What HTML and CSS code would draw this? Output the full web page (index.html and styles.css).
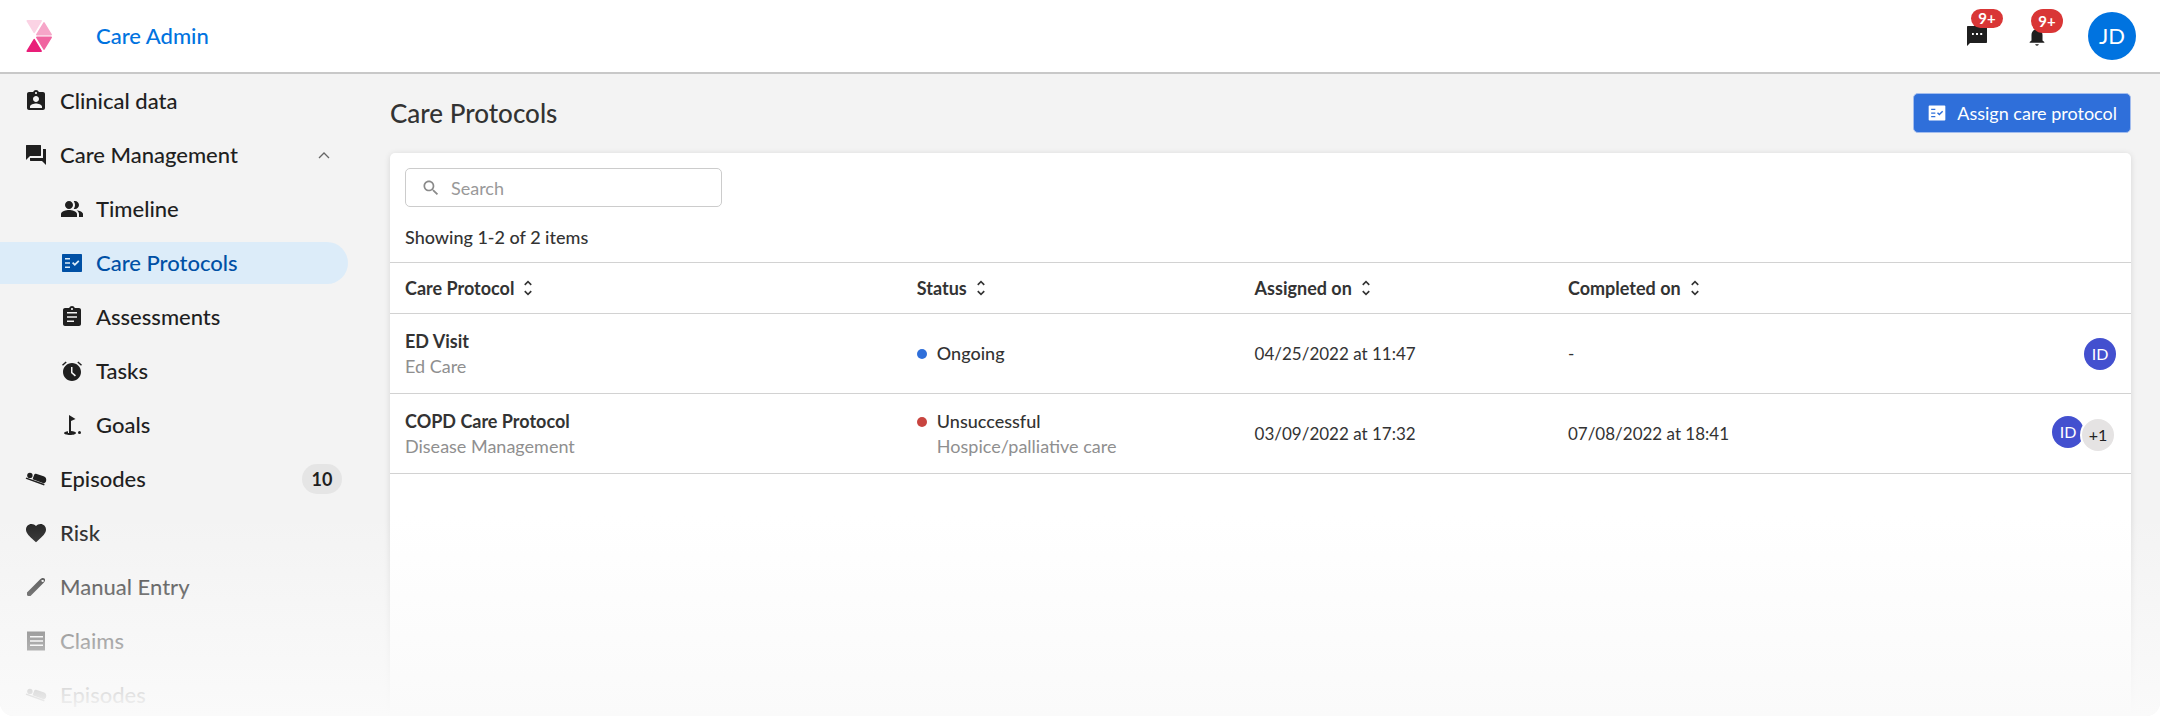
FILE: index.html
```html
<!DOCTYPE html>
<html lang="en">
<head>
<meta charset="utf-8">
<meta name="viewport" content="width=device-width, initial-scale=1">
<title>Care Protocols</title>
<link rel="stylesheet" href="styles.css">
</head>
<body>
<svg class="sprite" aria-hidden="true">
  <symbol id="i-person-card" viewBox="0 0 24 24"><path d="M19 3h-4.180C14.400 1.840 13.300 1 12 1c-1.300 0-2.400.84-2.820 2H5c-1.100 0-2 .9-2 2v14c0 1.100.9 2 2 2h14c1.100 0 2-.9 2-2V5c0-1.100-.9-2-2-2zm-7 0c.55 0 1 .45 1 1s-.45 1-1 1-1-.45-1-1 .45-1 1-1zm0 4c1.660 0 3 1.340 3 3s-1.340 3-3 3-3-1.340-3-3 1.340-3 3-3zm6 12H6v-1.400c0-2 4-3.100 6-3.100s6 1.100 6 3.100V19z"/></symbol>
  <symbol id="i-chats" viewBox="0 0 24 24"><path d="M21.500 6H19v9H6v2.500c0 .3.200.5.500.5H18l4 4V6.500c0-.3-.2-.5-.5-.5zM17 12.500V2.500c0-.3-.2-.5-.5-.5h-14c-.3 0-.5.200-.5.500V17l4-4h10.500c.3 0 .5-.2.500-.5z"/></symbol>
  <symbol id="i-people" viewBox="0 0 24 24"><path fill-rule="evenodd" d="M16.670 13.130C18.040 14.060 19 15.320 19 17v3h4v-3c0-2.180-3.570-3.470-6.330-3.870zM15 12c2.210 0 4-1.790 4-4s-1.790-4-4-4c-.47 0-.91.1-1.330.24C14.500 5.270 15 6.580 15 8s-.5 2.730-1.330 3.760c.42.14.86.24 1.330.24zM9 12c2.210 0 4-1.790 4-4s-1.790-4-4-4-4 1.790-4 4 1.790 4 4 4zm0 1c-2.670 0-8 1.340-8 4v3h16v-3c0-2.660-5.330-4-8-4z"/></symbol>
  <symbol id="i-fact" viewBox="0 0 24 24"><path fill-rule="evenodd" d="M21 3H3c-.6 0-1 .4-1 1v16c0 .6.400 1 1 1h18c.6 0 1-.4 1-1V4c0-.6-.4-1-1-1zM10 17H5v-1.500h5V17zm0-4.200H5v-1.500h5v1.500zm0-4.300H5V7h5v1.500zm4.820 6.500L12 12.160l1.200-1.200 1.620 1.620L18.200 9.200l1.210 1.220L14.820 15z"/></symbol>
  <symbol id="i-clipboard" viewBox="0 0 24 24"><path d="M19 3h-4.180C14.400 1.840 13.300 1 12 1c-1.300 0-2.400.84-2.820 2H5c-1.100 0-2 .9-2 2v14c0 1.100.9 2 2 2h14c1.100 0 2-.9 2-2V5c0-1.100-.9-2-2-2zm-7 0c.55 0 1 .45 1 1s-.45 1-1 1-1-.45-1-1 .45-1 1-1zm2 14H7v-1.500h7V17zm3-4.200H7v-1.600h10v1.600zm0-4.300H7V7h10v1.500z"/></symbol>
  <symbol id="i-alarm" viewBox="0 0 24 24"><path fill-rule="evenodd" d="M22 5.720l-3.700-3.300-1 1.100 3.700 3.300L22 5.720zM6.700 3.500l-1-1.100L2 5.710l1 1.130L6.700 3.500zM12 4c-4.970 0-9 4.030-9 9s4.020 9 9 9c4.970 0 9-4.030 9-9s-4.030-9-9-9zM11 8h1.500v5.250l3.500 3.100-1.100 1.250-3.900-3.500V8z"/></symbol>
  <symbol id="i-golf" viewBox="0 0 24 24"><circle cx="19.500" cy="19.500" r="1.500"/><path d="M15.500 5.920L9 2v18H8v-1.730c-2.400.2-4 .99-4 1.730 0 1.100 2.690 2 6 2s6-.9 6-2c0-.99-2.160-1.810-5-1.970V8.100l4.500-2.180z"/></symbol>
  <symbol id="i-stretcher" viewBox="0 0 24 24"><path d="M22.100 14c-.6 1.800-1.600 2.600-3.300 2l-9.500-3.400c-.5-.2-.7-.6-.5-1.100l1.400-3.800c.3-.8 1-1.100 1.800-.9l7.600 2.500c2.200.8 3.100 2.600 2.500 4.700z"/><circle cx="5.900" cy="8.400" r="2.700"/><path d="M1.700 11.800l.5-1.300 18.400 6.600-.5 1.400z"/></symbol>
  <symbol id="i-heart" viewBox="0 0 24 24"><path d="M12 21.350l-1.450-1.320C5.400 15.360 2 12.280 2 8.500 2 5.420 4.420 3 7.500 3c1.740 0 3.410.81 4.500 2.090C13.090 3.810 14.760 3 16.500 3 19.580 3 22 5.420 22 8.500c0 3.780-3.400 6.860-8.550 11.540L12 21.350z"/></symbol>
  <symbol id="i-pencil" viewBox="0 0 24 24"><path fill-rule="evenodd" d="M3 17.500L16.200 4.300c1.700-1.700 3.500-1.700 4.300-.8.900.9.900 2.700-.8 4.300L6.500 21H4.200c-.7 0-1.200-.5-1.200-1.200v-2.300zM17.200 5.900l.9.900c.5.500 1.400.2 1.600-.3.200-.4.200-1-.1-1.300-.4-.3-1-.3-1.400-.1-.5.200-.9.500-1 .8z"/></symbol>
  <symbol id="i-receipt" viewBox="0 0 24 24"><path d="M19 17H6v-1.500h13V17zm0-4.200H6v-1.600h13v1.600zm0-4.300H6V7h13v1.500zM3 22l1-1 1 1 1-1 1 1 1-1 1 1 1-1 1 1 1-1 1 1 1-1 1 1 1-1 1 1 1-1 1 1 1-1 1 1V2l-1 1-1-1-1 1-1-1-1 1-1-1-1 1-1-1-1 1-1-1-1 1-1-1-1 1-1-1-1 1-1-1-1 1-1-1v20z"/></symbol>
  <symbol id="i-sms" viewBox="0 0 24 24"><path d="M21 2H3c-.6 0-1 .4-1 1v19l3-3h16c.6 0 1-.4 1-1V3c0-.6-.4-1-1-1zM8.800 11H7V9h1.800v2zm4.200 0h-2V9h2v2zm4.200 0h-2V9h2v2z"/></symbol>
  <symbol id="i-bell" viewBox="0 0 24 24"><path d="M12 22.500c1.100 0 1.800-.7 2-1.500h-4c.2.8.9 1.500 2 1.500zM18 17v-6c0-3.070-1.640-5.640-4.500-6.320V4c0-.83-.67-1.500-1.500-1.500s-1.500.67-1.500 1.500v.68C7.630 5.360 6 7.920 6 11v6l-2 1.500v.9h16v-.9L18 17z"/></symbol>
  <symbol id="i-search" viewBox="0 0 24 24"><path d="M15.500 14h-.79l-.28-.27C15.410 12.590 16 11.110 16 9.500 16 5.910 13.090 3 9.500 3S3 5.910 3 9.500 5.910 16 9.500 16c1.610 0 3.090-.59 4.230-1.570l.27.28v.79l5 4.990L20.490 19l-4.990-5zm-6 0C7.010 14 5 11.990 5 9.500S7.010 5 9.500 5 14 7.010 14 9.500 11.990 14 9.500 14z"/></symbol>
  <symbol id="i-sort" viewBox="0 0 24 24"><path d="M12 5.830L15.170 9l1.410-1.410L12 3 7.410 7.590 8.830 9 12 5.830zm0 12.340L8.830 15l-1.410 1.410L12 21l4.590-4.590L15.170 15 12 18.170z"/></symbol>
</svg>

<div class="app">
  <header class="topbar">
    <svg class="logo" viewBox="0 0 26 32" role="img" aria-label="Home" stroke-width="1.500" stroke-linejoin="round">
      <path d="M1.200.8h14L8.200 12.400z" fill="#fbd3e4" stroke="#fbd3e4"/>
      <path d="M18 2.900L25.200 14.700H10.800z" fill="#f6a5c8" stroke="#f6a5c8"/>
      <path d="M10.800 17.300h14.400L18 29.100z" fill="#f064a0" stroke="#f064a0"/>
      <path d="M8.200 19.600L15.200 31.200h-14z" fill="#e91e79" stroke="#e91e79"/>
    </svg>
    <a class="brand" href="#">Care Admin</a>
    <div class="tools">
      <button class="tool" type="button" aria-label="Messages"><svg class="icon"><use href="#i-sms"/></svg><span class="count">9+</span></button>
      <button class="tool" type="button" aria-label="Notifications"><svg class="icon medium"><use href="#i-bell"/></svg><span class="count tall">9+</span></button>
      <button class="user" type="button">JD</button>
    </div>
  </header>

  <div class="body">
    <nav class="sidebar">
      <a class="item" href="#"><svg class="icon"><use href="#i-person-card"/></svg>Clinical data</a>
      <a class="item" href="#"><svg class="icon"><use href="#i-chats"/></svg>Care Management
        <svg class="chevron" viewBox="0 0 12 8"><path d="M1 7l5-5 5 5" fill="none" stroke="#666" stroke-width="1.300"/></svg></a>
      <a class="item sub" href="#"><svg class="icon"><use href="#i-people"/></svg>Timeline</a>
      <a class="item sub current" href="#" aria-current="page"><svg class="icon"><use href="#i-fact"/></svg>Care Protocols</a>
      <a class="item sub" href="#"><svg class="icon"><use href="#i-clipboard"/></svg>Assessments</a>
      <a class="item sub" href="#"><svg class="icon"><use href="#i-alarm"/></svg>Tasks</a>
      <a class="item sub" href="#"><svg class="icon"><use href="#i-golf"/></svg>Goals</a>
      <a class="item" href="#"><svg class="icon"><use href="#i-stretcher"/></svg>Episodes<span class="pill">10</span></a>
      <a class="item" href="#"><svg class="icon"><use href="#i-heart"/></svg>Risk</a>
      <a class="item" href="#"><svg class="icon"><use href="#i-pencil"/></svg>Manual Entry</a>
      <a class="item" href="#"><svg class="icon"><use href="#i-receipt"/></svg>Claims</a>
      <a class="item" href="#"><svg class="icon"><use href="#i-stretcher"/></svg>Episodes</a>
    </nav>

    <main class="main">
      <div class="heading">
        <h1>Care Protocols</h1>
        <button class="assign" type="button"><svg class="icon small"><use href="#i-fact"/></svg>Assign care protocol</button>
      </div>
      <section class="card">
        <label class="search">
          <svg class="icon small"><use href="#i-search"/></svg>
          <input type="search" placeholder="Search" aria-label="Search">
        </label>
        <p class="summary">Showing 1-2 of 2 items</p>
        <table>
          <thead>
            <tr>
              <th class="c-name"><button type="button">Care Protocol<svg class="icon small"><use href="#i-sort"/></svg></button></th>
              <th class="c-status"><button type="button">Status<svg class="icon small"><use href="#i-sort"/></svg></button></th>
              <th class="c-assigned"><button type="button">Assigned on<svg class="icon small"><use href="#i-sort"/></svg></button></th>
              <th class="c-completed"><button type="button">Completed on<svg class="icon small"><use href="#i-sort"/></svg></button></th>
              <th class="c-people"></th>
            </tr>
          </thead>
          <tbody>
            <tr>
              <td><strong>ED Visit</strong><div class="note">Ed Care</div></td>
              <td><div class="status"><i class="dot ongoing"></i><div><span class="state">Ongoing</span></div></div></td>
              <td class="date">04/25/2022 at 11:47</td>
              <td class="date">-</td>
              <td><div class="people"><span class="avatar">ID</span></div></td>
            </tr>
            <tr>
              <td><strong>COPD Care Protocol</strong><div class="note">Disease Management</div></td>
              <td><div class="status"><i class="dot failed"></i><div><span class="state">Unsuccessful</span><div class="note">Hospice/palliative care</div></div></div></td>
              <td class="date">03/09/2022 at 17:32</td>
              <td class="date">07/08/2022 at 18:41</td>
              <td><div class="people stack"><span class="avatar">ID</span><span class="avatar more">+1</span></div></td>
            </tr>
          </tbody>
        </table>
      </section>
    </main>
  </div>
  <div class="fade"></div>
</div>
</body>
</html>
```

FILE: styles.css
```css
* { box-sizing: border-box; }
body {
  margin: 0;
  background: #fff;
  color: #333;
  font-family: Lato, "Open Sans", sans-serif;
  font-size: 18px;
  line-height: 24px;
}
a { color: inherit; text-decoration: none; }
button { font: inherit; color: inherit; background: none; border: 0; padding: 0; cursor: pointer; }
.sprite { position: absolute; width: 0; height: 0; }
.icon { width: 24px; height: 24px; fill: currentColor; flex: none; }
.icon.medium { width: 22px; height: 22px; }
.icon.small { width: 20px; height: 20px; }

.app {
  position: relative;
  display: flex;
  flex-direction: column;
  min-height: 100vh;
  background: #f3f3f3;
  border-radius: 0 0 14px 14px;
  overflow: hidden;
}

/* Top bar */
.topbar {
  display: flex;
  align-items: center;
  height: 74px;
  padding: 0 24px 0 26px;
  background: #fff;
  border-bottom: 2px solid #c8c8c8;
}
.logo { width: 26px; height: 32px; }
.brand { margin-left: 44px; font-size: 22px; font-weight: 500; color: #0073e0; }
.tools { display: flex; align-items: center; margin-left: auto; color: #1f1f1f; }
.tool { position: relative; display: flex; align-items: center; justify-content: center; width: 24px; height: 24px; margin-right: 36px; }
.count {
  position: absolute;
  left: 6px;
  bottom: 20px;
  width: 32px;
  height: 19px;
  border-radius: 12px;
  background: #d93636;
  color: #fff;
  font-size: 15px;
  font-weight: 700;
  line-height: 19px;
}
.count.tall { height: 24px; line-height: 24px; bottom: 15px; }
.user { width: 48px; height: 48px; margin-left: 3px; border-radius: 50%; background: #0073e0; color: #fff; font-size: 22px; }

/* Sidebar */
.body { display: flex; flex: 1; }
.sidebar { display: flex; flex-direction: column; gap: 12px; width: 348px; padding-top: 6px; flex: none; color: #1f1f1f; }
.item {
  display: flex;
  align-items: center;
  gap: 12px;
  height: 42px;
  padding: 0 6px 0 24px;
  border-radius: 0 21px 21px 0;
  font-size: 22px;
  font-weight: 500;
}
.sub { padding-left: 60px; }
.current { background: #dcecf9; color: #0050a5; }
.chevron { width: 12px; height: 8px; margin: 0 12px 0 auto; }
.pill { min-width: 40px; height: 30px; margin-left: auto; border-radius: 15px; background: #e5e5e5; font-size: 18px; font-weight: 700; line-height: 30px; text-align: center; }

/* Main */
.main { display: flex; flex-direction: column; flex: 1; min-width: 0; padding: 19px 29px 0 42px; }
.heading { display: flex; align-items: center; justify-content: space-between; margin-bottom: 20px; }
h1 { margin: 0; font-size: 26px; font-weight: 500; line-height: 40px; }
.assign {
  display: flex;
  align-items: center;
  gap: 10px;
  height: 40px;
  padding: 0 13px;
  border: 1px solid #a3bdee;
  border-radius: 5px;
  background: #2f6fda;
  color: #fff;
}
.card { flex: 1; padding-top: 15px; border-radius: 5px 5px 0 0; background: #fff; box-shadow: 0 1px 6px rgba(0, 0, 0, .12); }
.search {
  display: flex;
  align-items: center;
  gap: 10px;
  width: 317px;
  height: 39px;
  margin: 0 15px;
  padding: 0 15px;
  border: 1px solid #ccc;
  border-radius: 5px;
  color: #8a8a8a;
}
.search input { flex: 1; min-width: 0; padding: 0; border: 0; outline: 0; background: none; font: inherit; color: #333; }
.search input::placeholder { color: #999; opacity: 1; }
.summary { margin: 18px 15px 13px; font-weight: 500; }

table { width: 100%; border-collapse: collapse; table-layout: fixed; }
th, td { padding: 0 15px; border: solid #d2d2d2; border-width: 1px 0; text-align: left; }
th { height: 51px; }
td { height: 80px; line-height: 25px; }
th button { display: flex; align-items: center; gap: 4px; font-weight: 700; }
.c-name { width: 29.400%; }
.c-status { width: 19.400%; }
.c-assigned { width: 18%; }
.date { font-size: 17px; }
.note { color: #8f8f8f; }
.status { display: flex; gap: 10px; }
.dot { width: 10px; height: 10px; margin-top: 8px; border-radius: 50%; }
.ongoing { background: #2f6fda; }
.failed { background: #c8443f; }
.state { font-weight: 500; }
.people { display: flex; justify-content: flex-end; }
.avatar { width: 32px; height: 32px; border-radius: 50%; background: #4350cf; color: #fff; font-size: 16px; line-height: 32px; text-align: center; }
.stack { align-items: flex-start; }
.stack .more { margin: 3px 2px 0 -2px; background: #e5e3e3; color: #222; box-shadow: 0 0 0 2px #fff; }

.fade {
  position: absolute;
  left: 0;
  right: 0;
  bottom: 0;
  height: 200px;
  background: linear-gradient(rgba(250, 250, 250, 0), #fafafa);
  pointer-events: none;
}
```
